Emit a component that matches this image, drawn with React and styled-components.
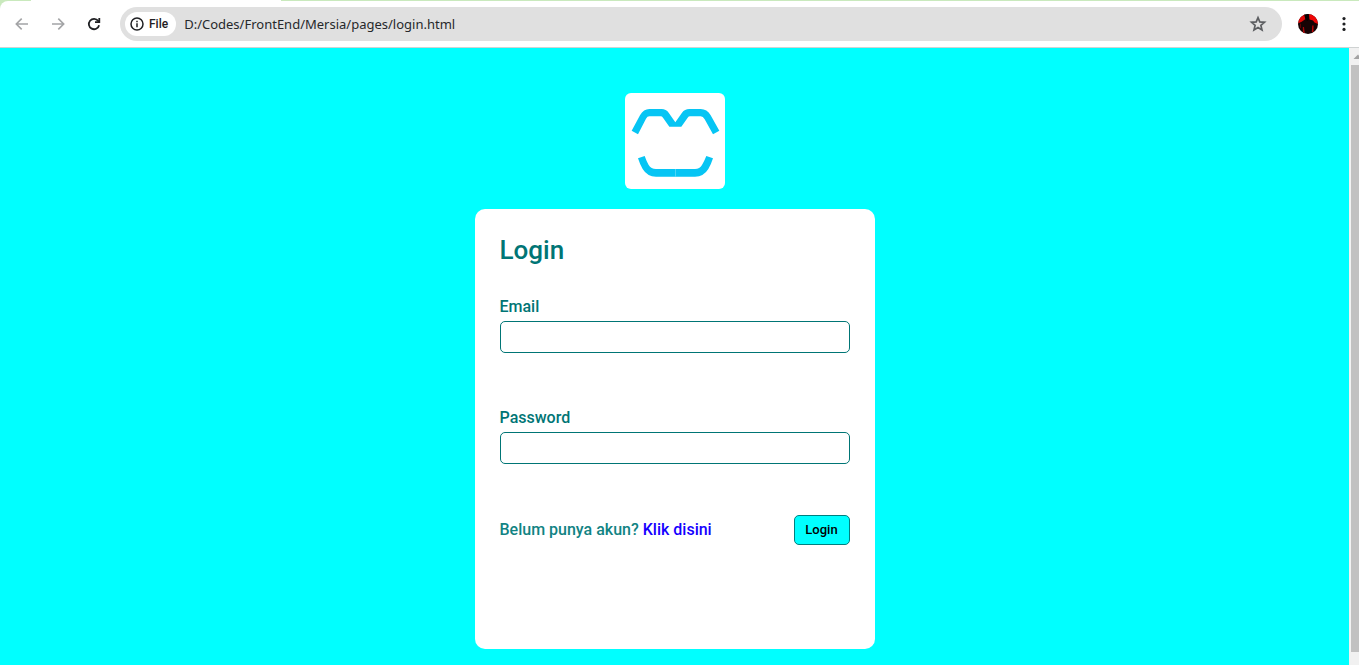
import React from "react";
import styled, { createGlobalStyle } from "styled-components";

const GlobalStyle = createGlobalStyle`
  *, *::before, *::after { box-sizing: border-box; }
  body {
    margin: 0;
    font-family: Roboto, "Liberation Sans", sans-serif;
  }
`;

const Window = styled.div`
  display: flex;
  flex-direction: column;
  height: 100vh;
  overflow: hidden;
  background: #c9e9bd;
`;

const TabStrip = styled.div`
  flex: none;
  height: 1px;
  padding-left: 31px;
`;

const ActiveTab = styled.div`
  width: 250px;
  height: 100%;
  background: #ffffff;
`;

const Toolbar = styled.header`
  flex: none;
  display: flex;
  align-items: center;
  height: 47px;
  padding: 0 5px 0 6px;
  background: #ffffff;
  border-bottom: 1px solid #cfd2d2;
  border-top-left-radius: 8px;
`;

const IconButton = styled.button`
  flex: none;
  display: flex;
  align-items: center;
  justify-content: center;
  width: ${(p) => p.$width || 32}px;
  height: 32px;
  padding: 0;
  border: 0;
  background: transparent;
  color: ${(p) => p.$color || "#1f2023"};
`;

const NavButtons = styled.nav`
  display: flex;
  gap: 4px;
  margin-right: 10px;
`;

const AddressBar = styled.div`
  flex: 1;
  display: flex;
  align-items: center;
  min-width: 0;
  height: 34px;
  padding: 0 8px 0 5px;
  border-radius: 17px;
  background: #e0e0e0;
`;

const SiteChip = styled.button`
  flex: none;
  display: flex;
  align-items: center;
  gap: 4px;
  height: 24px;
  padding: 0 8px 0 4px;
  border: 0;
  border-radius: 12px;
  background: #ffffff;
  color: #1f2023;
  font: 500 12px/16px Roboto, sans-serif;
`;

const AddressInput = styled.input`
  flex: 1;
  min-width: 0;
  margin-left: 8px;
  padding: 0;
  border: 0;
  outline: 0;
  background: transparent;
  color: #26282b;
  font: 400 13px/20px "Noto Sans", sans-serif;
`;

const Viewport = styled.div`
  flex: 1;
  display: flex;
  min-height: 0;
`;

const Page = styled.main`
  flex: 1;
  display: flex;
  flex-direction: column;
  align-items: center;
  gap: 20px;
  padding: 45px 16px 16px;
  overflow: hidden;
  background: #00ffff;
`;

const ScrollTrack = styled.div`
  flex: none;
  display: flex;
  flex-direction: column;
  width: 10px;
  padding: 0 0 13px 2px;
  background: #f1f1f1;
`;

const ScrollArrow = styled.svg`
  flex: none;
  display: block;
  width: 8px;
  height: 17px;
`;

const ScrollThumb = styled.div`
  flex: 1;
  background: #c1c1c1;
`;

const LogoTile = styled.div`
  flex: none;
  width: 100px;
  height: 96px;
  border-radius: 6px;
  background: #ffffff;
`;

const Card = styled.form`
  flex: none;
  display: flex;
  flex-direction: column;
  width: 100%;
  max-width: 400px;
  min-height: 440px;
  padding: 25px;
  border-radius: 10px;
  background: #ffffff;
  color: #007575;
  font-size: 16px;
  font-weight: 500;
  line-height: 20px;
`;

const Title = styled.h1`
  margin: 0 0 31px;
  font-size: 26px;
  font-weight: 500;
  line-height: 32px;
`;

const Field = styled.div`
  display: flex;
  flex-direction: column;
  gap: 4px;
  margin-bottom: 55px;
`;

const TextInput = styled.input`
  width: 100%;
  height: 32px;
  padding: 0 8px;
  border: 1px solid #007575;
  border-radius: 5px;
  background: #ffffff;
  font: inherit;
`;

const Actions = styled.div`
  display: flex;
  align-items: center;
  justify-content: space-between;
  margin-top: -4px;
`;

const Hint = styled.p`
  margin: 0;
  color: #118383;
`;

const SignupLink = styled.a`
  color: #1500ff;
  text-decoration: none;
`;

const SubmitButton = styled.button`
  min-width: 56px;
  height: 30px;
  padding: 0 10px;
  border: 1px solid #008080;
  border-radius: 5px;
  background: #00ffff;
  color: #000000;
  font: 500 13px/16px Roboto, sans-serif;
`;

const ArrowIcon = ({ flipped }) => (
  <svg width="16" height="16" viewBox="0 0 16 16" fill="none" stroke="currentColor" strokeWidth="1.6">
    <path d={flipped ? "M2 8H13.4M8.3 2.6L13.7 8L8.3 13.4" : "M14 8H2.6M7.7 2.6L2.3 8L7.7 13.4"} />
  </svg>
);

const ReloadIcon = () => (
  <svg width="16" height="16" viewBox="0 0 16 16" fill="none" stroke="currentColor" strokeWidth="1.8">
    <path d="M13.1 9.3A5.2 5.2 0 1 1 12.2 4.9L13.2 6" />
    <path d="M13.3 2V6.2H9" />
  </svg>
);

const InfoIcon = () => (
  <svg width="16" height="16" viewBox="0 0 16 16" fill="none" stroke="currentColor" strokeWidth="1.5">
    <circle cx="8" cy="8" r="6" />
    <path d="M8 7.2V11.2M8 4.8V6.3" />
  </svg>
);

const StarIcon = () => (
  <svg width="18" height="18" viewBox="0 0 18 18" fill="none" stroke="currentColor" strokeWidth="1.7">
    <path d="M9 2.6L10.8 6.9L15.5 7.3L11.9 10.4L13 15L9 12.5L5 15L6.1 10.4L2.5 7.3L7.2 6.9Z" />
  </svg>
);

const Avatar = () => (
  <svg width="20" height="20" viewBox="0 0 20 20">
    <defs>
      <clipPath id="avatar-round">
        <circle cx="10" cy="10" r="10" />
      </clipPath>
    </defs>
    <g clipPath="url(#avatar-round)">
      <rect width="20" height="20" fill="#160304" />
      <path d="M0 0H7L7.6 5L4 7.5L1 9H0Z" fill="#e00808" />
      <path d="M11 0H20V10L16.5 8.5L15 6.5L11.5 5.5Z" fill="#ee0606" />
      <path d="M6 0H10.5L11 5L9.5 7L7.5 5.5Z" fill="#050102" />
      <path d="M4.8 13L6 13L6.8 19H5Z" fill="#a80707" />
      <path d="M14.2 11.5L15.6 11.5L15.4 18H13.8Z" fill="#b80707" />
      <path d="M2 10L3 9.5L3 14L2 14Z" fill="#5c0505" />
    </g>
  </svg>
);

const MenuIcon = () => (
  <svg width="16" height="16" viewBox="0 0 16 16" fill="currentColor">
    <circle cx="8" cy="2.6" r="1.6" />
    <circle cx="8" cy="8" r="1.6" />
    <circle cx="8" cy="13.4" r="1.6" />
  </svg>
);

const Logo = () => (
  <svg width="100" height="96" viewBox="45 39 300 288" fill="#06c5f4" role="img" aria-label="Mersia">
    <path d="M65 152L90 106Q101 87 118 87H155Q168 87 176 98L196 127L216 98Q224 87 238 87H272Q291 87 302 106L328 152L309 163L284 118Q279 109 272 109H240Q236 109 233 113L214 140H178L159 113Q156 109 152 109H118Q112 109 108 116L84 163Z" />
    <path d="M84 235L104 228Q110 245 116 255Q123 267 138 267H255Q269 267 276 255Q283 243 289 228L309 235Q303 254 295 267Q281 290 255 290H138Q112 290 98 267Q90 254 84 235Z" />
    <path d="M196.500 267V290" stroke="#6fdff9" strokeWidth="2" />
  </svg>
);

export default function App() {
  return (
    <Window>
      <GlobalStyle />
      <TabStrip>
        <ActiveTab />
      </TabStrip>
      <Toolbar>
        <NavButtons>
          <IconButton aria-label="Back" $color="#a3a4a6"><ArrowIcon /></IconButton>
          <IconButton aria-label="Forward" $color="#a3a4a6"><ArrowIcon flipped /></IconButton>
          <IconButton aria-label="Reload"><ReloadIcon /></IconButton>
        </NavButtons>
        <AddressBar>
          <SiteChip type="button"><InfoIcon />File</SiteChip>
          <AddressInput aria-label="Address" defaultValue="D:/Codes/FrontEnd/Mersia/pages/login.html" />
          <IconButton aria-label="Bookmark" $color="#5c5e61"><StarIcon /></IconButton>
        </AddressBar>
        <IconButton aria-label="Profile" $width={52}><Avatar /></IconButton>
        <IconButton aria-label="Menu" $width={20}><MenuIcon /></IconButton>
      </Toolbar>
      <Viewport>
        <Page>
          <LogoTile><Logo /></LogoTile>
          <Card onSubmit={(e) => e.preventDefault()}>
            <Title>Login</Title>
            <Field>
              <label htmlFor="email">Email</label>
              <TextInput id="email" type="email" />
            </Field>
            <Field>
              <label htmlFor="password">Password</label>
              <TextInput id="password" type="password" />
            </Field>
            <Actions>
              <Hint>Belum punya akun? <SignupLink href="#daftar">Klik disini</SignupLink></Hint>
              <SubmitButton type="submit">Login</SubmitButton>
            </Actions>
          </Card>
        </Page>
        <ScrollTrack aria-hidden="true">
          <ScrollArrow viewBox="0 0 8 17"><path d="M2.500 11L7 6.500L11.500 11Z" fill="#a3a3a3" /></ScrollArrow>
          <ScrollThumb />
        </ScrollTrack>
      </Viewport>
    </Window>
  );
}
